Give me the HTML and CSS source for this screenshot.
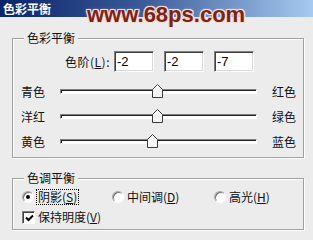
FILE: index.html
```html
<!DOCTYPE html>
<html lang="zh-CN">
<head>
    <meta charset="UTF-8">
    <meta name="viewport" content="width=device-width, initial-scale=1.0">
    <title>色彩平衡</title>
    <link rel="stylesheet" href="styles.css">
</head>
<body>
    <div class="window">
        <div class="titlebar">色彩平衡</div>
        <div class="watermark">www.68ps.com</div>

        <div class="content">
            <div class="group group-balance">
                <span class="group-title">色彩平衡</span>
                <div class="levels">
                    <label class="levels-label" for="level-1">色阶(<u>L</u>):</label>
                    <div class="levels-inputs">
                        <input class="num" id="level-1" type="text" value="-2">
                        <input class="num" type="text" value="-2">
                        <input class="num" type="text" value="-7">
                    </div>
                </div>

                <div class="sliders">
                    <div class="slider-row">
                        <span class="side side-left">青色</span>
                        <div class="track">
                            <span class="thumb" style="left: 49%"><svg width="11" height="14" viewBox="0 0 11 14"><polygon points="0.5,13.5 0.5,5.5 5.5,0.5 10.5,5.5 10.5,13.5" fill="#f6f6f6" stroke="#3a3a3a"/><polyline points="1.5,12.5 1.5,6 5.5,2" fill="none" stroke="#fff"/></svg></span>
                        </div>
                        <span class="side side-right">红色</span>
                    </div>
                    <div class="slider-row">
                        <span class="side side-left">洋红</span>
                        <div class="track">
                            <span class="thumb" style="left: 49%"><svg width="11" height="14" viewBox="0 0 11 14"><polygon points="0.5,13.5 0.5,5.5 5.5,0.5 10.5,5.5 10.5,13.5" fill="#f6f6f6" stroke="#3a3a3a"/><polyline points="1.5,12.5 1.5,6 5.5,2" fill="none" stroke="#fff"/></svg></span>
                        </div>
                        <span class="side side-right">绿色</span>
                    </div>
                    <div class="slider-row">
                        <span class="side side-left">黄色</span>
                        <div class="track">
                            <span class="thumb" style="left: 46.5%"><svg width="11" height="14" viewBox="0 0 11 14"><polygon points="0.5,13.5 0.5,5.5 5.5,0.5 10.5,5.5 10.5,13.5" fill="#f6f6f6" stroke="#3a3a3a"/><polyline points="1.5,12.5 1.5,6 5.5,2" fill="none" stroke="#fff"/></svg></span>
                        </div>
                        <span class="side side-right">蓝色</span>
                    </div>
                </div>
            </div>

            <div class="group group-tone">
                <span class="group-title">色调平衡</span>
                <div class="tones">
                    <label class="opt"><span class="radio checked"></span><span class="focus">阴影(<u>S</u>)</span></label>
                    <label class="opt"><span class="radio"></span><span>中间调(<u>D</u>)</span></label>
                    <label class="opt"><span class="radio"></span><span>高光(<u>H</u>)</span></label>
                </div>
                <label class="opt opt-check"><span class="check"><svg width="11" height="11" viewBox="0 0 11 11"><polyline points="2,4.5 4.5,7 9,2.5" fill="none" stroke="#000" stroke-width="2"/></svg></span><span>保持明度(<u>V</u>)</span></label>
            </div>
        </div>
    </div>
</body>
</html>
```

FILE: styles.css
```css
html, body {
    margin: 0;
    background: #ececec;
}
body {
    font-family: "Noto Sans CJK SC", "Liberation Sans", sans-serif;
    font-size: 12px;
    line-height: 14px;
    color: #111;
}
.window {
    position: relative;
    width: 313px;
    height: 240px;
    overflow: hidden;
}

/* title bar + watermark */
.titlebar {
    height: 17px;
    line-height: 17px;
    padding-left: 3px;
    background: linear-gradient(to right, #0a246a 0%, #3a5a98 45%, #a6caf0 100%);
    color: #fff;
    font-weight: bold;
    font-size: 12px;
}
.watermark {
    position: absolute;
    left: 87px;
    top: 2px;
    font-family: "Liberation Sans", Arial, sans-serif;
    font-size: 22px;
    font-weight: bold;
    line-height: 25px;
    color: #7a2418;
    text-shadow: 1px 0 0 #f6dcd4, -1px 0 0 #f6dcd4, 0 1px 0 #f6dcd4, 0 -1px 0 #f6dcd4,
                 1px 1px 0 #f6dcd4, -1px -1px 0 #f6dcd4, 1px -1px 0 #f6dcd4, -1px 1px 0 #f6dcd4,
                 0 0 3px #fff;
}

/* groups */
.content {
    padding-left: 12px;
}
.group {
    position: relative;
    width: 292px;
    box-sizing: border-box;
    border: 1px solid #a0a0a0;
    box-shadow: inset 1px 1px 0 #fff, 1px 1px 0 #fff;
}
.group-title {
    position: absolute;
    top: -8px;
    left: 11px;
    padding: 0 3px;
    background: #ececec;
    line-height: 14px;
}
.group-balance {
    margin-top: 21px;
    height: 120px;
    padding-top: 12px;
}
.group-tone {
    margin-top: 20px;
    height: 52px;
    padding: 10px 0 0 9px;
}

/* levels */
.levels {
    display: flex;
    align-items: center;
    height: 21px;
}
.levels-label {
    width: 97px;
    margin-right: 4px;
    text-align: right;
    letter-spacing: 0.5px;
}
.levels-inputs {
    display: flex;
    gap: 10px;
}
.num {
    width: 40px;
    height: 21px;
    box-sizing: border-box;
    margin: 0;
    padding: 0 2px;
    border: 1px solid;
    border-color: #808080 #fff #fff #808080;
    box-shadow: inset 1px 1px 0 #404040, inset -1px -1px 0 #d8d8d8;
    background: #fff;
    font-family: "Liberation Sans", Arial, sans-serif;
    font-size: 13px;
    color: #000;
    outline: none;
}

/* sliders */
.sliders {
    margin-top: 7px;
}
.slider-row {
    display: flex;
    align-items: center;
    height: 25px;
}
.side-left {
    width: 39px;
    margin-left: 8px;
}
.side-right {
    margin-left: 15px;
}
.track {
    position: relative;
    width: 197px;
    height: 5px;
    box-sizing: border-box;
    border: 1px solid;
    border-color: #808080 #fff #fff #808080;
    box-shadow: inset 1px 1px 0 #202020;
    background: #fff;
}
.thumb {
    position: absolute;
    top: -6px;
    width: 11px;
    height: 14px;
    margin-left: -5px;
}
.thumb svg {
    display: block;
}

/* tone options */
.tones {
    display: grid;
    grid-template-columns: 90px 102px auto;
    align-items: center;
    height: 16px;
}
.opt {
    display: flex;
    align-items: center;
    gap: 3px;
    height: 16px;
}
.opt-check {
    margin-top: 4px;
}
.radio {
    position: relative;
    width: 12px;
    height: 12px;
    box-sizing: border-box;
    border-radius: 50%;
    border: 1px solid;
    border-color: #a8a8a8 #fff #fff #a8a8a8;
    box-shadow: inset 1px 1px 0 #707070;
    background: #fff;
}
.radio.checked::after {
    content: "";
    position: absolute;
    left: 3px;
    top: 3px;
    width: 4px;
    height: 4px;
    border-radius: 50%;
    background: #000;
}
.focus {
    outline: 1px dotted #000;
    padding: 0 1px;
}
.check {
    width: 13px;
    height: 13px;
    box-sizing: border-box;
    border: 1px solid;
    border-color: #808080 #fff #fff #808080;
    box-shadow: inset 1px 1px 0 #404040;
    background: #fff;
    padding: 1px 0 0 1px;
}
.check svg {
    display: block;
}
```
